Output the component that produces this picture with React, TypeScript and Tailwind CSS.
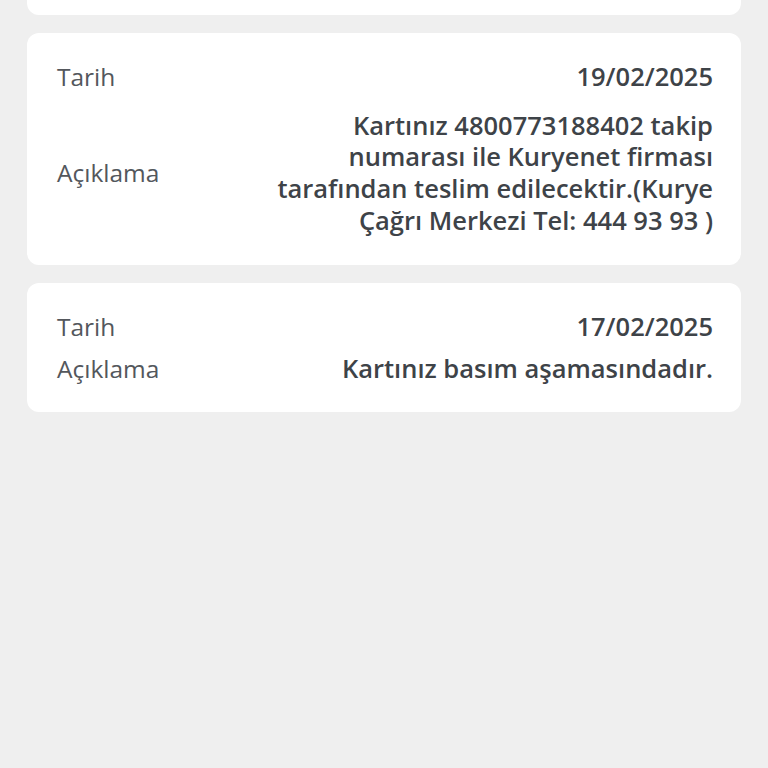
import React from "react";

const font = { fontFamily: '"Open Sans", "Liberation Sans", sans-serif' };

function Row({ label, value }: { label: string; value: React.ReactNode }) {
  return (
    <div className="flex items-center justify-between">
      <div className="text-[24.5px] leading-[31.7px] text-[#53575c] font-normal shrink-0">{label}</div>
      <div className="text-[25.5px] leading-[31.7px] text-[#3e4348] font-semibold text-right max-w-[450px]">{value}</div>
    </div>
  );
}

export default function App() {
  return (
    <div className="min-h-[768px] bg-[#efefef] px-[27px] flex flex-col gap-[18px]" style={font}>
      <div className="h-[15px] bg-white rounded-b-[12px]" />
      <div className="bg-white rounded-[12px] pl-[30px] pr-[28px] pt-[28px] pb-[28px] flex flex-col gap-[17px]">
        <Row label="Tarih" value="19/02/2025" />
        <Row
          label="Açıklama"
          value="Kartınız 4800773188402 takip numarası ile Kuryenet firması tarafından teslim edilecektir.(Kurye Çağrı Merkezi Tel: 444 93 93 )"
        />
      </div>
      <div className="bg-white rounded-[12px] pl-[30px] pr-[28px] pt-[28px] pb-[27.5px] flex flex-col gap-[10.3px]">
        <Row label="Tarih" value="17/02/2025" />
        <Row label="Açıklama" value="Kartınız basım aşamasındadır." />
      </div>
    </div>
  );
}
